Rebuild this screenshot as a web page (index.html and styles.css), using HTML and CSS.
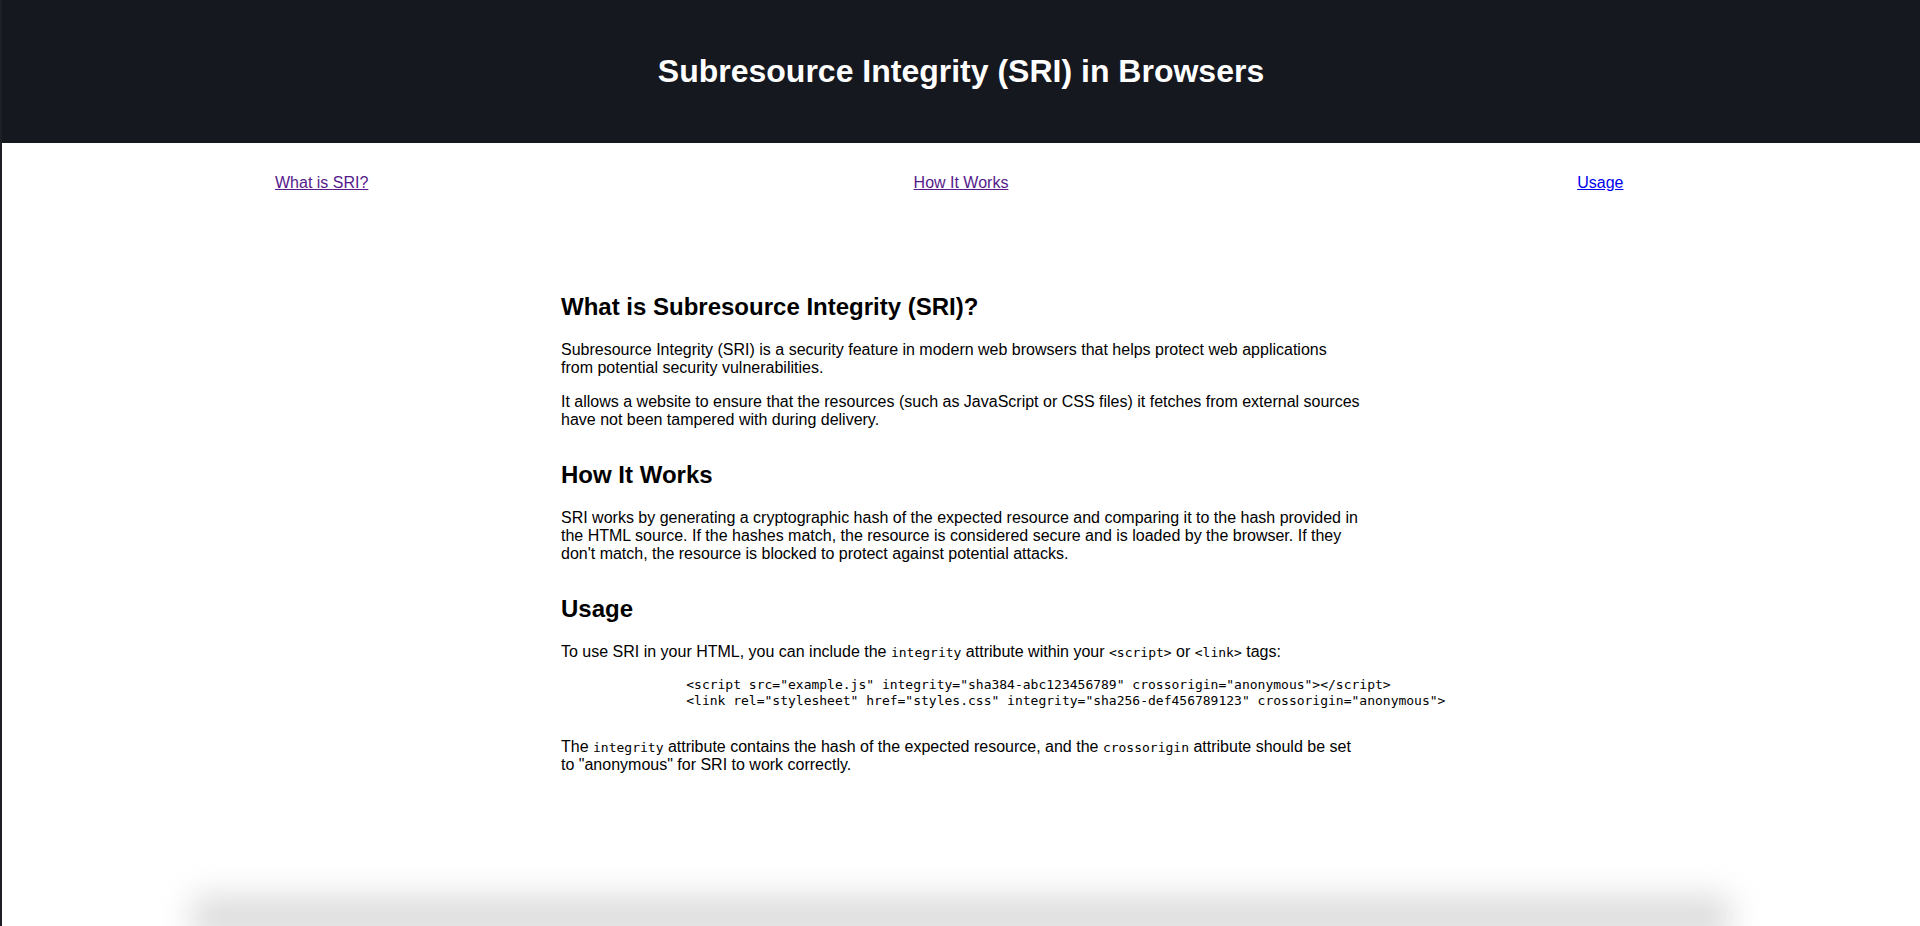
FILE: index.html
```html
<!DOCTYPE html>
<html lang="en">
<head>
<meta charset="utf-8">
<title>Subresource Integrity (SRI) in Browsers</title>
<link rel="stylesheet" href="styles.css">
</head>
<body>
<div class="frame">
  <header class="site-header">
    <h1 class="site-title">Subresource Integrity (SRI) in Browsers</h1>
  </header>
  <nav class="site-nav">
    <ul class="nav-list">
      <li><a class="nav-link visited" href="#what">What is SRI?</a></li>
      <li><a class="nav-link visited" href="#how">How It Works</a></li>
      <li><a class="nav-link" href="#usage">Usage</a></li>
    </ul>
  </nav>
  <main class="content">
    <section class="section" id="what">
      <h2 class="section-title">What is Subresource Integrity (SRI)?</h2>
      <p class="text">Subresource Integrity (SRI) is a security feature in modern web browsers that helps protect web applications from potential security vulnerabilities.</p>
      <p class="text">It allows a website to ensure that the resources (such as JavaScript or CSS files) it fetches from external sources have not been tampered with during delivery.</p>
    </section>
    <section class="section" id="how">
      <h2 class="section-title">How It Works</h2>
      <p class="text">SRI works by generating a cryptographic hash of the expected resource and comparing it to the hash provided in the HTML source. If the hashes match, the resource is considered secure and is loaded by the browser. If they don't match, the resource is blocked to protect against potential attacks.</p>
    </section>
    <section class="section" id="usage">
      <h2 class="section-title">Usage</h2>
      <p class="text">To use SRI in your HTML, you can include the <code class="inline-code">integrity</code> attribute within your <code class="inline-code">&lt;script&gt;</code> or <code class="inline-code">&lt;link&gt;</code> tags:</p>
      <pre class="code-block"><code>                &lt;script src="example.js" integrity="sha384-abc123456789" crossorigin="anonymous"&gt;&lt;/script&gt;
                &lt;link rel="stylesheet" href="styles.css" integrity="sha256-def456789123" crossorigin="anonymous"&gt;</code></pre>
      <p class="text">The <code class="inline-code">integrity</code> attribute contains the hash of the expected resource, and the <code class="inline-code">crossorigin</code> attribute should be set to "anonymous" for SRI to work correctly.</p>
    </section>
  </main>
  <div class="window-shade" aria-hidden="true"></div>
</div>
</body>
</html>
```

FILE: styles.css
```css
html, body {
  margin: 0;
  padding: 0;
}

body {
  background: #ffffff;
  color: #000000;
  font-family: "Liberation Sans", Arial, sans-serif;
  font-size: 16px;
  overflow: hidden;
}

.frame {
  position: relative;
  border-left: 2px solid #1d1f24;
  height: 926px;
  box-sizing: border-box;
  overflow: hidden;
}

.site-header {
  background: #161820;
  color: #ffffff;
  text-align: center;
  padding: 31.5px 0;
}

.site-title {
  margin: 21.44px 0;
  font-size: 32px;
  font-weight: bold;
}

.site-nav {
  padding: 31px 0 30px;
}

.nav-list {
  list-style: none;
  margin: 0;
  padding: 0;
  display: grid;
  grid-template-columns: repeat(3, 1fr);
  justify-items: center;
}

.nav-link {
  color: #0000ee;
  text-decoration: underline;
}

.nav-link.visited {
  color: #551a8b;
}

.content {
  max-width: 800px;
  margin: 0 auto;
  padding: 51px 0 40px;
}

.section {
  margin-bottom: 32px;
}

.section-title {
  font-size: 24px;
  font-weight: bold;
  margin: 19.92px 0;
}

.text {
  margin: 16px 0;
  line-height: normal;
}

.inline-code {
  font-family: "DejaVu Sans Mono", "Liberation Mono", monospace;
  font-size: 13px;
}

.code-block {
  margin: 16px 0 29px;
  font-family: "DejaVu Sans Mono", "Liberation Mono", monospace;
  font-size: 13px;
  line-height: 16px;
}

.window-shade {
  position: absolute;
  left: 190px;
  right: 190px;
  bottom: -14px;
  height: 44px;
  background: #dcdcdc;
  filter: blur(16px);
  pointer-events: none;
}
```
